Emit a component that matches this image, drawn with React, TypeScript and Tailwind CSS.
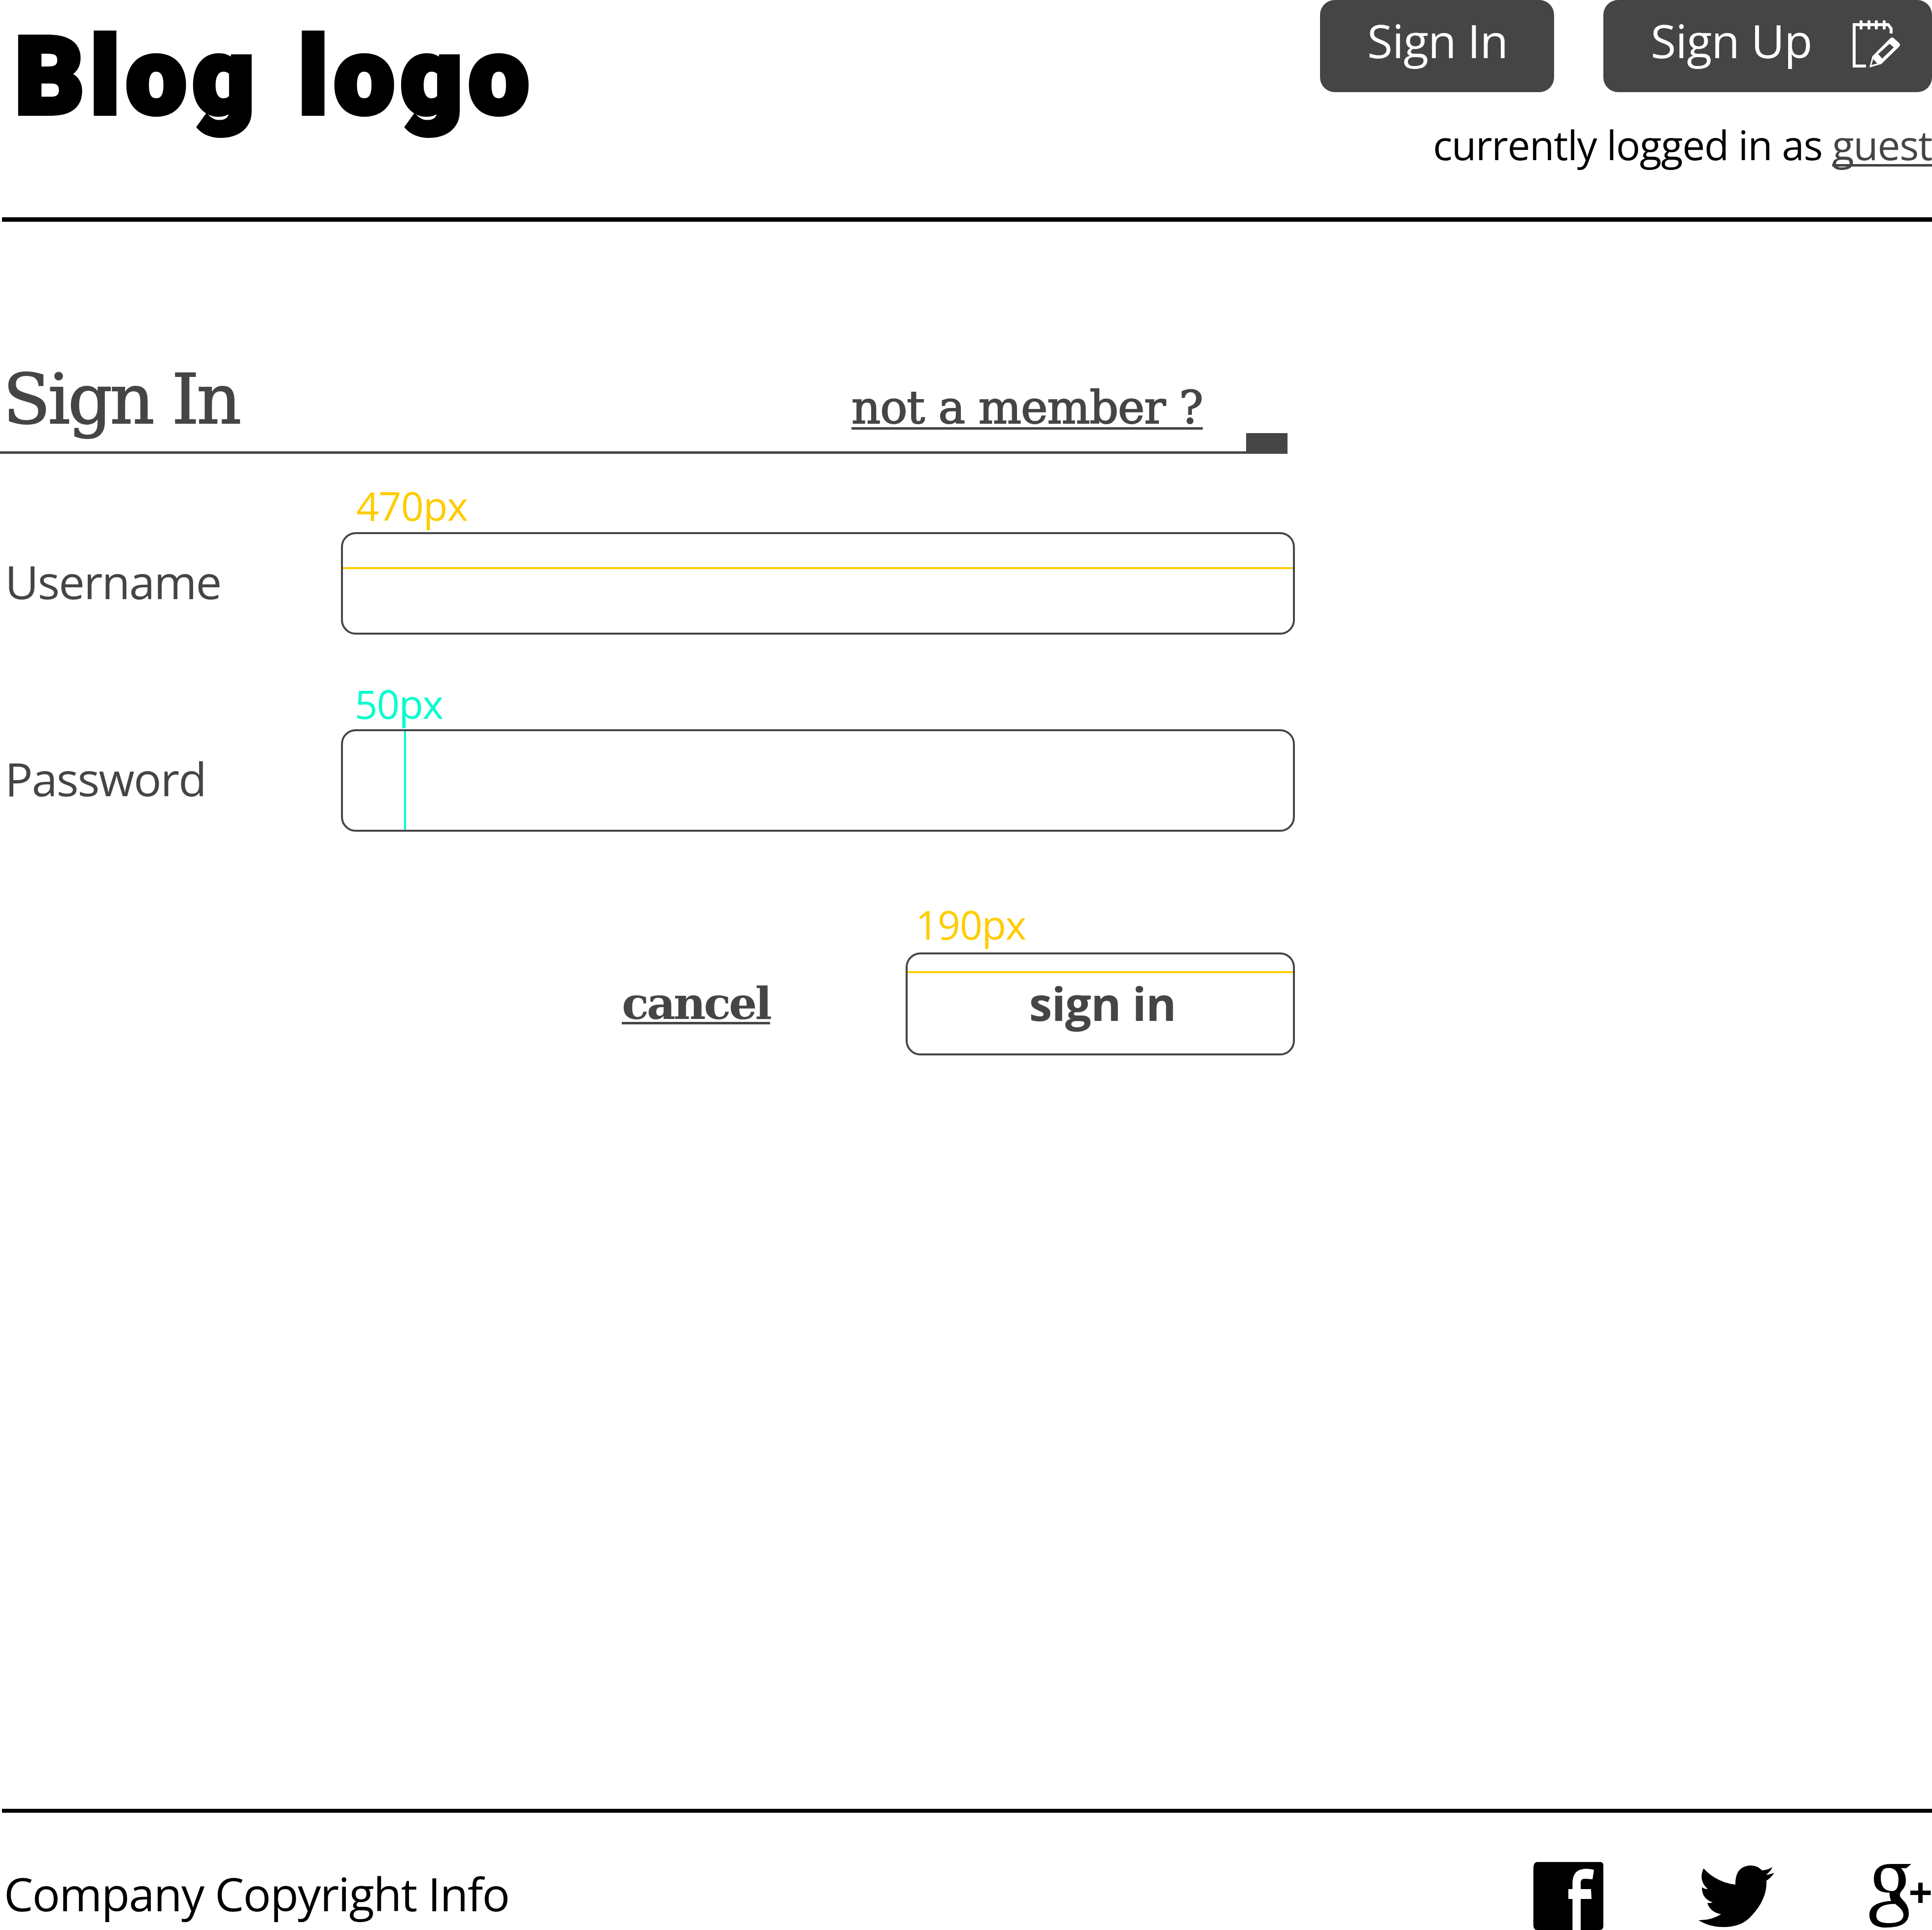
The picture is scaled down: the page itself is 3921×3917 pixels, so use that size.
export default function App() {
  return (
    <div className="flex h-[3917px] w-[3921px] flex-col overflow-hidden bg-white font-['Open_Sans',sans-serif] text-[94px] leading-none text-[#454545]">
      {/* Header */}
      <header className="flex h-[441px] justify-between">
        <div className="pl-[30px] pt-[47px] font-['Roboto',sans-serif] text-[218px] font-black leading-none tracking-[12.5px] text-black [-webkit-text-stroke:10px_#000] [word-spacing:10px]">
          Blog logo
        </div>
        <div className="flex flex-col items-end">
          <div className="flex gap-[100px]">
            <a className="flex h-[187px] w-[475px] justify-center rounded-[30px] bg-[#454545] pl-[2px] pt-[35px] tracking-[-1px] text-white">
              Sign In
            </a>
            <a className="flex h-[187px] w-[667px] items-start rounded-[30px] bg-[#454545] pl-[96px] pt-[35px] tracking-[-1px] text-white">
              Sign Up
              <NotepadIcon />
            </a>
          </div>
          <p className="mt-[65px] text-[82px] tracking-[-1.3px] text-black">
            currently logged in as{" "}
            <a className="text-[#454545] underline decoration-[5px] underline-offset-[8px] [text-decoration-skip-ink:none]">guest</a>
          </p>
        </div>
      </header>
      <div className="ml-[4px] h-[9px] bg-black" />

      {/* Sign in form */}
      <main className="flex w-[2628px] flex-1 flex-col pt-[290px]">
        <div className="flex w-[2613px] items-end border-b-[5px] border-[#454545]">
          <div className="flex items-baseline pb-[35px] font-['DejaVu_Serif',serif] [-webkit-text-stroke:2px_#454545]">
            <h1 className="ml-[6px] text-[141px] leading-none tracking-[-5px]">Sign In</h1>
            <a className="ml-[1243px] text-[92px] leading-none tracking-[-1.2px] underline decoration-[5px] underline-offset-[8px]">not a member ?</a>
          </div>
          <div className="ml-auto h-[37px] w-[84px] bg-[#454545]" />
        </div>

        <div className="mt-[159px] flex items-center">
          <label className="w-[692px] pb-[9px] pl-[10px] tracking-[-2px]">Username</label>
          <div className="relative h-[208px] flex-1 rounded-[30px] border-4 border-[#454545]">
            <span className="absolute left-[27px] top-[-99px] text-[81px] tracking-[-1px] text-[#ffcc00]">470px</span>
            <div className="absolute inset-x-0 top-[67px] h-[4px] bg-[#ffcc00]" />
          </div>
        </div>

        <div className="mt-[192px] flex items-center">
          <label className="w-[692px] pb-[9px] pl-[10px] tracking-[-2px]">Password</label>
          <div className="relative h-[208px] flex-1 rounded-[30px] border-4 border-[#454545]">
            <span className="absolute left-[24px] top-[-97px] text-[81px] tracking-[-1.6px] text-[#00ffcc]">50px</span>
            <div className="absolute inset-y-0 left-[124px] w-[4px] bg-[#00ffcc]" />
          </div>
        </div>

        <div className="mt-[245px] flex items-center">
          <a className="mb-[4px] ml-[1262px] font-['DejaVu_Serif',serif] text-[90px] font-bold leading-none tracking-[-4px] underline decoration-[5px] underline-offset-[6px]">cancel</a>
          <button className="relative ml-auto flex h-[209px] w-[790px] items-center justify-center rounded-[30px] border-4 border-[#454545] pb-[3px] pl-[9px] font-bold tracking-[-1px]">
            <span className="absolute left-[16px] top-[-102px] text-[81px] font-normal tracking-[-1.5px] text-[#ffcc00]">190px</span>
            <div className="absolute inset-x-0 top-[34px] h-[4px] bg-[#ffcc00]" />
            sign in
          </button>
        </div>
      </main>

      {/* Footer */}
      <div className="ml-[4px] h-[8px] bg-black" />
      <footer className="flex h-[238px] justify-between text-black">
        <p className="pl-[8px] pt-[117px] tracking-[-1.7px]">Company Copyright Info</p>
        <div className="flex items-center gap-[193px] self-start pr-[2px] pt-[100px]">
          <FacebookIcon />
          <TwitterIcon />
          <GooglePlusIcon />
        </div>
      </footer>
    </div>
  );
}

function NotepadIcon() {
  return (
    <svg className="ml-[83px] mt-[6px] h-[98px] w-[98px] text-white" viewBox="0 0 98 98" fill="none">
      <path d="M27 93H3V9H72L78 17V27" stroke="currentColor" strokeWidth="6" />
      <path d="M17 3V16M33 3V16M48 3V16M64 3V16" stroke="currentColor" strokeWidth="6" strokeLinecap="round" />
      <path
        fillRule="evenodd"
        fill="currentColor"
        d="M34 96L40 73L76 37Q80 33 84 37L94 46Q98 50 94 54L58 89ZM51.7 68.7L60 77.7L83.3 55.3L75 47.7ZM41.7 79L38 91L50 87.7Z"
      />
    </svg>
  );
}

function FacebookIcon() {
  return (
    <svg className="h-[138px] w-[142px]" viewBox="0 0 142 138" fill="currentColor">
      <path d="M8 0H136Q142 0 142 8V130Q142 138 134 138H96V75H118L117 55H96V42Q96 33 106 34L120 35L123 16Q112 13 103 14Q80 16 79.4 42V55H71V75H79.4V138H8Q0 138 0 128V14Q0 0 8 0Z" />
    </svg>
  );
}

function TwitterIcon() {
  return (
    <svg className="h-[125px] w-[154px]" viewBox="0 0 154 125" fill="currentColor">
      <path d="M150 3Q142 9 129 10Q120 0 105 0Q74 2 75 39Q36 34 10.5 6Q-1 30 19 48Q12 48 7 44Q7 68 29 75Q23 77 18 76Q24 95 46 99Q25 112 0 111Q22 125 51 125Q85 125 104 106Q140 70 138 31Q147 25 154 15Q146 18 137 19Q147 12 150 3Z" />
    </svg>
  );
}

function GooglePlusIcon() {
  return (
    <svg className="h-[130px] w-[125px]" viewBox="0 0 125 130" fill="currentColor">
      <path
        fillRule="evenodd"
        d="M44 0H85L75 8.5H64Q74 18 74 34Q74 46 65 55Q58 63 66 71Q80 84 80 100Q80 129 34 129Q0 129 0 103Q0 78 44 75Q40 65 41 58Q9 60 9 30Q9 0 44 0ZM38 8Q23 8 23 28Q23 55 46 55Q59 55 59 32Q59 8 38 8ZM52 81Q14 81 14 105Q14 120 40 120Q69 120 69 103Q69 93 52 81Z"
      />
      <path d="M99 38H108V54H124.5V63H108V79H99V63H83V54H99Z" />
    </svg>
  );
}
